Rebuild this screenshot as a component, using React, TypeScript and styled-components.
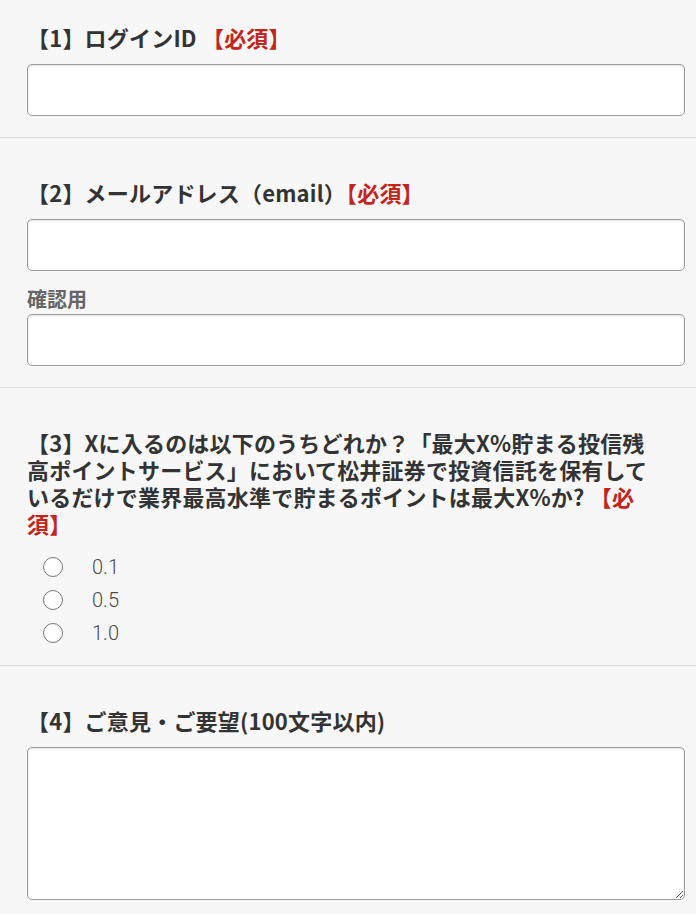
import styled, { createGlobalStyle } from 'styled-components';

const GlobalStyle = createGlobalStyle`
  html, body {
    margin: 0;
    padding: 0;
    background: #f7f7f7;
  }
  body {
    font-family: "Noto Sans CJK JP", "Noto Sans", sans-serif;
    color: #333333;
  }
  * {
    box-sizing: border-box;
  }
`;

const Form = styled.form`
  display: flex;
  flex-direction: column;
  width: 100%;
`;

const Section = styled.section<{ $first?: boolean; $padBottom?: number }>`
  display: flex;
  flex-direction: column;
  padding: ${(p) => (p.$first ? 24 : 41)}px 11px ${(p) => p.$padBottom ?? 21}px 27px;
  border-bottom: 1px solid #dedede;

  &:last-child {
    border-bottom: none;
  }
`;

const Heading = styled.label`
  display: block;
  margin: 0 0 13px;
  font-size: 22px;
  line-height: 27px;
  font-weight: 700;
  letter-spacing: 0.2px;
  color: #333333;
`;

const Required = styled.span`
  color: #c3241c;
`;

const SubLabel = styled.label`
  display: block;
  margin: 16px 0 3px;
  font-size: 20px;
  line-height: 24px;
  font-weight: 700;
  color: #666666;
`;

const TextInput = styled.input`
  display: block;
  width: 100%;
  height: 52px;
  margin: 0;
  padding: 0 12px;
  background: #ffffff;
  border: 1px solid #9c9c9c;
  border-radius: 5px;
  box-shadow: inset 0 1px 2px rgba(0, 0, 0, 0.12);
  font-size: 18px;
  font-family: inherit;
  outline: none;
`;

const TextArea = styled.textarea`
  display: block;
  width: 100%;
  height: 153px;
  margin: 0;
  padding: 8px 12px;
  background: #ffffff;
  border: 1px solid #9c9c9c;
  border-radius: 5px;
  box-shadow: inset 0 1px 2px rgba(0, 0, 0, 0.12);
  font-size: 18px;
  font-family: inherit;
  outline: none;
`;

const RadioList = styled.div`
  display: flex;
  flex-direction: column;
`;

const RadioRow = styled.label`
  display: flex;
  align-items: center;
  height: 33px;
  padding-left: 16px;
  cursor: pointer;
`;

const RadioInput = styled.input`
  appearance: none;
  width: 20px;
  height: 20px;
  margin: 0;
  background: #ffffff;
  border: 1.5px solid #777777;
  border-radius: 50%;

  &:checked {
    background: radial-gradient(circle, #555 0 4px, #fff 5px);
  }
`;

const RadioText = styled.span`
  margin-left: 29px;
  font-family: Roboto, "Noto Sans", sans-serif;
  font-size: 20px;
  font-weight: 300;
  color: #4a4a4a;
`;

const choices = ['0.1', '0.5', '1.0'];

export default function App() {
  return (
    <>
      <GlobalStyle />
      <Form onSubmit={(e) => e.preventDefault()}>
        <Section $first>
          <Heading htmlFor="login-id">
            【1】ログインID <Required>【必須】</Required>
          </Heading>
          <TextInput id="login-id" type="text" />
        </Section>

        <Section>
          <Heading htmlFor="email">
            【2】メールアドレス（email）<Required>【必須】</Required>
          </Heading>
          <TextInput id="email" type="email" />
          <SubLabel htmlFor="email-confirm">確認用</SubLabel>
          <TextInput id="email-confirm" type="email" />
        </Section>

        <Section $padBottom={16}>
          <Heading as="p">
            【3】Xに入るのは以下のうちどれか？「最大X%貯まる投信残
            <br />
            高ポイントサービス」において松井証券で投資信託を保有して
            <br />
            いるだけで業界最高水準で貯まるポイントは最大X%か? <Required>【必
            <br />
            須】</Required>
          </Heading>
          <RadioList>
            {choices.map((c) => (
              <RadioRow key={c}>
                <RadioInput type="radio" name="q3" value={c} />
                <RadioText>{c}</RadioText>
              </RadioRow>
            ))}
          </RadioList>
        </Section>

        <Section>
          <Heading htmlFor="opinion">【4】ご意見・ご要望(100文字以内)</Heading>
          <TextArea id="opinion" />
        </Section>
      </Form>
    </>
  );
}
